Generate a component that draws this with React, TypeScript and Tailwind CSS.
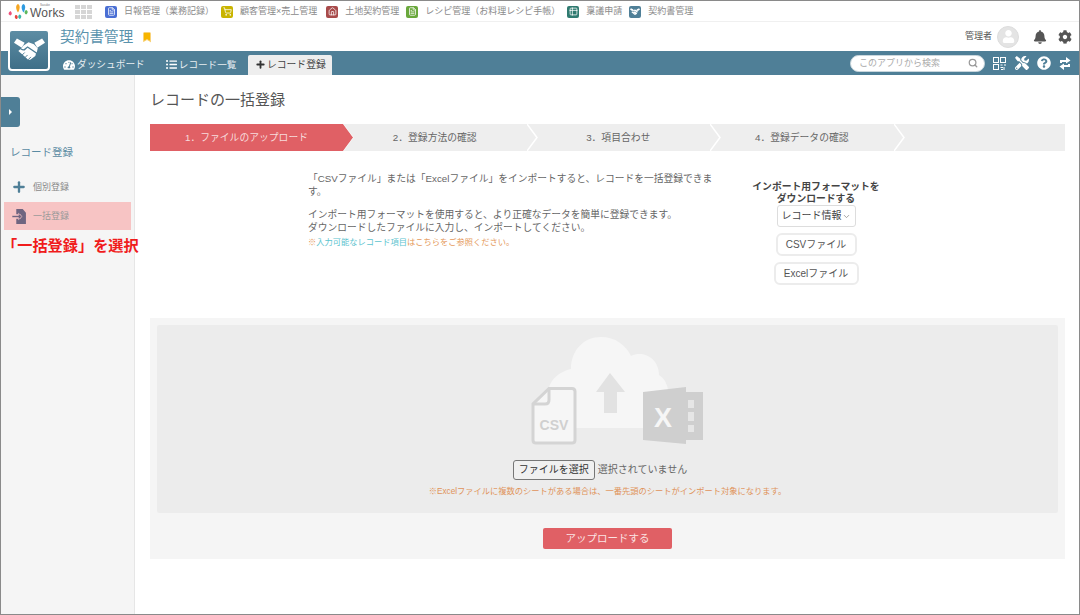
import { ChevronDown, Search, Plus, Bookmark, ShoppingCart, Home, FileText, Table2 } from "lucide-react";
import { FaBell, FaCog, FaQuestionCircle, FaTools, FaUser, FaTachometerAlt, FaListUl } from "react-icons/fa";

const font = "font-['Liberation_Sans','Noto_Sans_CJK_JP',sans-serif]";

function HandshakeMark({ width, color = "#4f7f97" }: { width: number; color?: string }) {
  return (
    <svg width={width} height={(width * 24) / 32} viewBox="0 0 32 24" fill="#fff">
      <path d="M0 5 L3 0.5 L11 5 L8 10 Z" />
      <path d="M32 5 L29 0.5 L21 5 L24 10 Z" />
      <path d="M20.5 6.5 L15 4.5 L9.5 8 L7.5 11 L10 11.5 L14 8.5 L23.5 15 L24.5 10.5 Z" />
      <path d="M6.5 11.5 L4.5 13.5 L13 21 Q15 23.5 17.5 22 L22 18.5 L22.7 16 L14 10 L11 12.8 Q9 13.4 6.5 11.5 Z" />
      <path d="M8 18 L11 15 M11 20.5 L14 17.5 M14.5 22.5 L17.5 19.5" fill="none" stroke={color} strokeWidth="1" />
    </svg>
  );
}

function AppLink({ label, color, icon, className = "" }: { label: string; color: string; icon: React.ReactNode; className?: string }) {
  return (
    <div className={`flex items-center gap-[7px] ${className}`}>
      <span className={`flex h-[12px] w-[12px] items-center justify-center rounded-[2px] ${color}`}>{icon}</span>
      <span className="text-[9px] leading-none text-[#8a8a8a]">{label}</span>
    </div>
  );
}

function TopBar() {
  return (
    <div className="flex h-[21px] items-center border-b border-[#f0f0f0] pl-[6px] pt-[1px]">
      <svg width="22" height="17" viewBox="0 0 22 17" className="mr-[1px]">
        <path d="M3.5 8 C5 9.5 5.5 11 3.5 12.5 C1.5 12 0.5 10 3.5 8 Z" fill="#ee4f7a" />
        <path d="M11 1 C13 2 13.5 5 11 9.5 C8.5 6 8.5 2 11 1 Z" fill="#f5a623" />
        <path d="M16.5 1 C18.5 2 19 5 16.5 9.5 C14 6 14 2 16.5 1 Z" fill="#2f9be0" />
        <path d="M19 7 C21 7.5 21.5 10 19 11.5 C17 10.5 17 8 19 7 Z" fill="#5cb85c" />
        <path d="M8.5 12 C10.5 12 11.5 14 10 16 C8 16 7 14 8.5 12 Z" fill="#e8453c" />
        <path d="M12.5 11.5 C14.5 12 15 14 13 16 C11 15.5 10.5 13 12.5 11.5 Z" fill="#3bb8a8" />
      </svg>
      <div className="flex w-[33px] flex-col">
        <span className="pl-[10px] text-[3px] leading-[3px] text-[#777]">Sasuke</span>
        <span className="text-[12px] leading-[12px] tracking-[0.2px] text-[#555]">Works</span>
      </div>
      <div className="ml-[12px] mr-[13px] grid grid-cols-3 gap-[1px]">
        {Array.from({ length: 9 }).map((_, i) => (
          <span key={i} className="h-[4px] w-[5px] bg-[#d6d6d6]" />
        ))}
      </div>
      <div className="flex items-center gap-[7px]">
        <AppLink label="日報管理（業務記録）" color="bg-[#4a6fd4]" icon={<FileText size={9} color="#fff" />} />
        <AppLink label="顧客管理×売上管理" color="bg-[#c9b400]" className="mr-[2px]" icon={<ShoppingCart size={9} color="#fff" />} />
        <AppLink label="土地契約管理" color="bg-[#a84b4b]" icon={<Home size={9} color="#fff" />} />
        <AppLink label="レシピ管理（お料理レシピ手帳）" color="bg-[#6aa83c]" icon={<FileText size={9} color="#fff" />} />
        <AppLink label="稟議申請" color="bg-[#2f7a70]" icon={<Table2 size={9} color="#fff" />} />
        <AppLink label="契約書管理" color="bg-[#4f7f97]" icon={<HandshakeMark width={10} />} />
      </div>
    </div>
  );
}

function Header() {
  return (
    <div className="relative">
      <div className="flex h-[29px] items-center pl-[59px] pr-[7px]">
        <span className="mt-[1px] text-[14.5px] leading-none tracking-[0.2px] text-[#5a93ad]">契約書管理</span>
        <Bookmark size={12} className="ml-[7px]" fill="#f7b500" color="#f9d37a" />
        <div className="ml-auto flex items-center">
          <span className="mr-[5px] text-[9px] leading-none text-[#555]">管理者</span>
          <span className="relative flex h-[22px] w-[22px] items-center justify-center overflow-hidden rounded-full border border-[#ddd] bg-[#e4e4e4]">
            <FaUser size={13} color="#fff" />
          </span>
          <FaBell size={14} color="#555" className="ml-[14px]" />
          <FaCog size={14} color="#555" className="ml-[11px]" />
        </div>
      </div>
      <div className="flex h-[24px] items-end bg-[#4f7f97] pl-[62px] pr-[8px]">
        <div className="flex h-[20px] items-center gap-[2px] pb-[1px] text-[9.7px] leading-none text-[#e8eef1]">
          <FaTachometerAlt size={12} color="#fff" />
          <span>ダッシュボード</span>
        </div>
        <div className="ml-[21px] flex h-[20px] items-center gap-[2px] pb-[1px] text-[9.6px] leading-none text-[#e8eef1]">
          <FaListUl size={11} color="#fff" />
          <span>レコード一覧</span>
        </div>
        <div className="ml-[12px] flex h-[20px] w-[84px] items-center justify-center gap-[1px] rounded-t-[2px] bg-[#eeeeee] pb-[1px] text-[9.8px] leading-none text-[#444]">
          <Plus size={11} strokeWidth={4} color="#333" />
          <span>レコード登録</span>
        </div>
        <div className="ml-auto flex h-full items-center">
          <div className="flex h-[17px] w-[135px] items-center justify-between rounded-full border border-[#c9d6dc] bg-white pl-[8px] pr-[6px]">
            <span className="text-[9px] leading-none text-[#aaa]">このアプリから検索</span>
            <Search size={10} color="#999" strokeWidth={3} />
          </div>
          <svg width="13" height="13" viewBox="0 0 13 13" className="ml-[8px]" fill="none" stroke="#fff">
            <rect x="0.5" y="0.5" width="5" height="5" />
            <rect x="7.5" y="0.5" width="5" height="5" />
            <rect x="0.5" y="7.5" width="5" height="5" />
            <path d="M7.5 8 h2 M11 8 h2 M7.5 10.5 h2.5 M8 12.5 h2 M11 10 v3" />
          </svg>
          <FaTools size={14} color="#fff" className="ml-[9px]" />
          <FaQuestionCircle size={14} color="#fff" className="ml-[8px]" />
          <svg width="12" height="15" viewBox="0 0 12 15" className="ml-[8px]" fill="#fff">
            <path d="M1 7 V4 H7 V1 L11.5 4.5 L7 7.5 V6 H3 V7 Z" />
            <path d="M11 8 V11 H5 V14 L0.5 10.5 L5 7.5 V9 H9 V8 Z" />
          </svg>
        </div>
      </div>
      <div className="absolute left-[7px] top-[7px] flex h-[42px] w-[42px] items-center justify-center rounded-[4px] border-2 border-white bg-gradient-to-b from-[#5d8da4] to-[#3f6f88]">
        <HandshakeMark width={31} color="#4f7f97" />
      </div>
    </div>
  );
}

function Sidebar() {
  return (
    <aside className="relative flex w-[134px] shrink-0 flex-col border-r border-[#e6e6e6] bg-[#f5f5f5] pt-[70px]">
      <div className="absolute left-0 top-[22px] flex h-[30px] w-[19px] items-center justify-center rounded-r-[3px] bg-[#4f7f97]">
        <span className="h-0 w-0 border-y-[3px] border-l-[3px] border-y-transparent border-l-white" />
      </div>
      <div className="pl-[9px] text-[10.5px] leading-[14px] text-[#5a8ba3]">レコード登録</div>
      <div className="mt-[14px] flex h-[28px] items-center pl-[10px]">
        <Plus size={16} strokeWidth={3.5} color="#4f7f97" />
        <span className="ml-[6px] text-[9px] leading-none text-[#888]">個別登録</span>
      </div>
      <div className="ml-[3px] mt-[1px] flex h-[28px] w-[127px] items-center bg-[#f7c4c4] pl-[8px]">
        <svg width="15" height="15" viewBox="0 0 14 14" fill="#6f6580">
          <path d="M4 0 H10 L13 3.5 V14 H4 V9 H8 V5 H4 Z" />
          <path d="M0 6 H6 V4 L9.5 7 L6 10 V8 H0 Z" stroke="#f7c4c4" strokeWidth="0.6" />
        </svg>
        <span className="ml-[6px] text-[9px] leading-none text-[#999]">一括登録</span>
      </div>
      <div className="relative z-10 ml-[1px] mt-[8px] whitespace-nowrap text-[15.2px] font-bold leading-none text-[#f01c1c]">「一括登録」を選択</div>
    </aside>
  );
}

const steps = ["1．ファイルのアップロード", "2．登録方法の確認", "3．項目合わせ", "4．登録データの確認"];

function Steps() {
  return (
    <div className="relative mt-[14px] flex h-[27px] bg-[#eeeeee]">
      {steps.map((s, i) => (
        <div
          key={s}
          className={`relative flex h-full items-center justify-center text-[9.8px] leading-none ${i === 0 ? "w-[193px] bg-[#e06065] text-[#f7dcdc]" : "w-[183.5px] text-[#666]"}`}
        >
          {s}
          <svg width="11" height="27" viewBox="0 0 11 27" className="absolute left-full top-0 z-10">
            <path d="M0 0 L10 13.5 L0 27 Z" fill={i === 0 ? "#e06065" : "#eeeeee"} />
            {i > 0 && <path d="M0 0 L10 13.5 L0 27" fill="none" stroke="#fff" strokeWidth="1.5" />}
            {i === 0 && <path d="M0.5 0 L10.5 13.5 L0.5 27" fill="none" stroke="#fff" strokeWidth="0.5" />}
          </svg>
        </div>
      ))}
    </div>
  );
}

function Intro() {
  return (
    <div className="mt-[21px] flex h-[146px]">
      <div className="ml-[158px] w-[408px] text-[9.75px] leading-[13px] text-[#666]">
        <p>「CSVファイル」または「Excelファイル」をインポートすると、レコードを一括登録できます。</p>
        <p className="mt-[10px]">インポート用フォーマットを使用すると、より正確なデータを簡単に登録できます。</p>
        <p>ダウンロードしたファイルに入力し、インポートしてください。</p>
        <p className="mt-[3px] text-[8.25px] leading-[12px] text-[#e59a5c]">
          ※<span className="text-[#5cc4cf]">入力可能なレコード項目</span>はこちらをご参照ください。
        </p>
      </div>
      <div className="ml-[35px] flex w-[130px] flex-col items-center">
        <div className="mt-[9px] whitespace-nowrap text-center text-[9.8px] font-bold leading-[12px] text-[#444]">
          インポート用フォーマットを
          <br />
          ダウンロードする
        </div>
        <div className="flex h-[22px] w-[79px] items-center justify-center rounded-[3px] border border-[#ddd] bg-white text-[10px] leading-none text-[#444]">
          レコード情報
          <ChevronDown size={9} color="#888" />
        </div>
        <div className="mt-[6px] flex h-[23px] w-[81px] items-center justify-center rounded-[6px] border-2 border-[#ececec] bg-white text-[10px] leading-none text-[#555]">
          CSVファイル
        </div>
        <div className="mt-[6px] flex h-[23px] w-[85px] items-center justify-center rounded-[6px] border-2 border-[#ececec] bg-white text-[10px] leading-none text-[#555]">
          Excelファイル
        </div>
      </div>
    </div>
  );
}

function UploadArt() {
  return (
    <svg width="230" height="130" viewBox="492 325 230 130" className="block">
      <path d="M547 428 V395 C547 380 558 372 570 369 C570 350 583 337 600 337 C614 337 625 345 630 356 C642 350 658 358 658 375 C666 380 670 390 670 428 Z" fill="#f6f6f6" />
      <path d="M609 373 L624 392 H616 V413 H603 V392 H595 Z" fill="#e2e2e2" />
      <path d="M548 388.5 H571 Q574 388.5 574 391.5 V440 Q574 443 571 443 H535 Q532 443 532 440 V404 Z" fill="#f6f6f6" stroke="#d4d4d4" strokeWidth="3" />
      <path d="M548 389 V400 Q548 404 544 404 H533" fill="none" stroke="#d4d4d4" strokeWidth="3" />
      <text x="553" y="430" textAnchor="middle" fontFamily="'Liberation Sans',sans-serif" fontWeight="700" fontSize="14" fill="#d0d0d0">CSV</text>
      <path d="M642 392 L685 387 V444 L642 440 Z" fill="#cfcfcf" />
      <path d="M685 392 H702 V440 H685 Z" fill="#cfcfcf" />
      <rect x="687" y="400" width="6" height="8" fill="#e6e6e6" />
      <rect x="687" y="412" width="6" height="9" fill="#e6e6e6" />
      <rect x="687" y="425" width="6" height="7" fill="#e6e6e6" />
      <text x="662" y="427" textAnchor="middle" fontFamily="'Liberation Sans',sans-serif" fontWeight="700" fontSize="27" fill="#f6f6f6">X</text>
    </svg>
  );
}

function UploadPanel() {
  return (
    <div className="flex h-[241px] flex-col items-center bg-[#f5f5f5] px-[7px] pt-[7px]">
      <div className="flex h-[188px] w-full flex-col items-center rounded-[2px] bg-[#ececec]">
        <UploadArt />
        <div className="mt-[5px] flex items-center pr-[15px]">
          <span className="flex h-[20px] w-[82px] items-center justify-center rounded-[3px] border border-[#767676] bg-[#f0f0f0] text-[10px] leading-none text-[#333]">
            ファイルを選択
          </span>
          <span className="ml-[3px] text-[10px] leading-none text-[#666]">選択されていません</span>
        </div>
        <div className="mt-[8px] text-[8.25px] leading-none text-[#e0935a]">
          ※Excelファイルに複数のシートがある場合は、一番先頭のシートがインポート対象になります。
        </div>
      </div>
      <div className="mt-[15px] flex h-[21px] w-[129px] items-center justify-center rounded-[2px] bg-[#e06065] text-[10.5px] leading-none text-[#fbe3e3]">
        アップロードする
      </div>
    </div>
  );
}

export default function App() {
  return (
    <div className={`flex h-[615px] w-[1080px] flex-col overflow-hidden border border-[#8a8a8a] bg-white ${font}`}>
      <TopBar />
      <Header />
      <div className="flex min-h-0 flex-1">
        <Sidebar />
        <main className="min-w-0 flex-1 pl-[15px] pr-[14px] pt-[15px]">
          <h1 className="text-[15px] font-normal leading-[20px] text-[#555]">レコードの一括登録</h1>
          <Steps />
          <Intro />
          <UploadPanel />
        </main>
      </div>
    </div>
  );
}
